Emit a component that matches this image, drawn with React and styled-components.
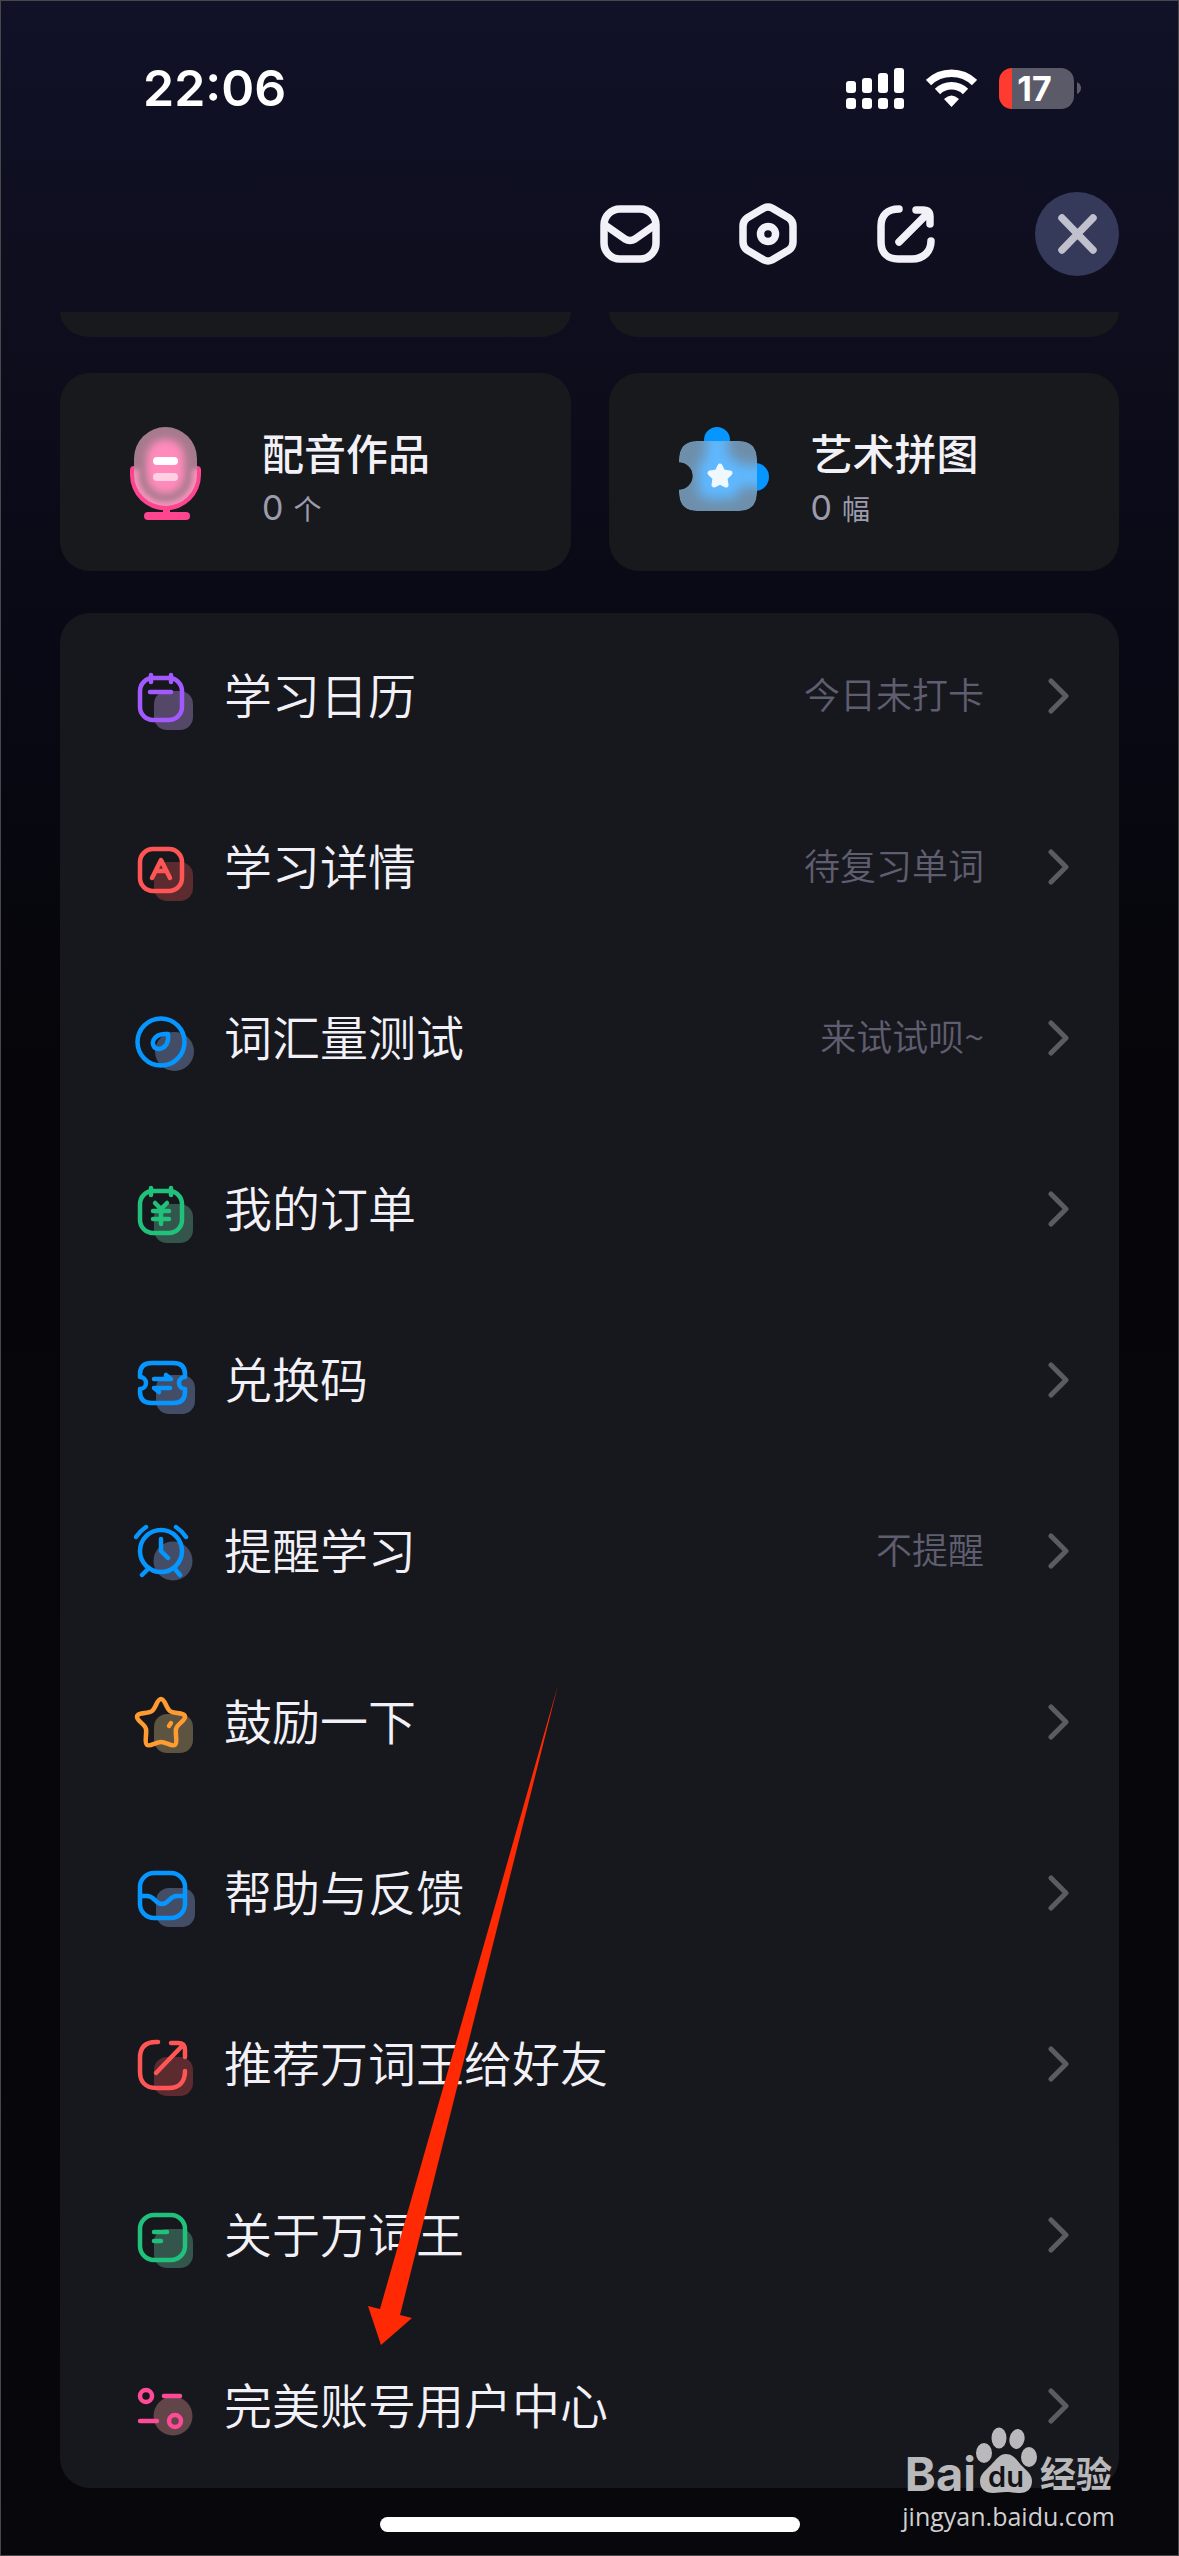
import React from "react";
import styled, { createGlobalStyle } from "styled-components";

const cjk = `"Noto Sans CJK SC", "Noto Sans", sans-serif`;
const latin = `Inter, "Noto Sans CJK SC", sans-serif`;

const GlobalStyle = createGlobalStyle`
  *, *::before, *::after { box-sizing: border-box; }
  body { margin: 0; background: #07070c; }
`;

const Page = styled.div`
  position: relative;
  display: flex;
  flex-direction: column;
  min-height: 100vh;
  border: 1px solid #48484c;
  background: linear-gradient(#111128 0, #0e0e1e 300px, #080914 660px, #060509 1080px, #07070c 100%);
  color: #f2f1f8;
  font-family: ${cjk};
`;

const StatusBar = styled.div`
  display: flex;
  align-items: center;
  justify-content: space-between;
  padding: 56px 97px 0 142px;
`;

const Time = styled.time`
  font: 600 50px/62px ${latin};
  color: #fff;
`;

const StatusIcons = styled.div`
  display: flex;
  align-items: center;
  gap: 22px;
`;

const Battery = styled.div`
  display: flex;
  align-items: center;
  gap: 3px;
`;

const BatteryBody = styled.div`
  width: 75px;
  height: 41px;
  padding-right: 4px;
  border-radius: 13px;
  background: linear-gradient(90deg, #ff3b30 13px, #5b5a68 13px);
  color: #fff;
  font: 700 34px/41px ${latin};
  text-align: center;
`;

const Toolbar = styled.header`
  display: flex;
  align-items: center;
  justify-content: flex-end;
  gap: 74px;
  padding: 73px 59px 36px;
`;

const ToolButton = styled.button`
  display: block;
  width: 64px;
  height: 64px;
  padding: 0;
  border: 0;
  background: none;
  color: #f2f1f8;
`;

const CloseButton = styled(ToolButton)`
  display: grid;
  place-items: center;
  width: 84px;
  height: 84px;
  margin-left: 23px;
  border-radius: 50%;
  background: #363a5a;
  color: #c1c1cd;
`;

const Content = styled.main`
  display: flex;
  flex-direction: column;
  padding: 0 59px;
`;

const CardGrid = styled.section`
  display: grid;
  grid-template-columns: 1fr 1fr;
  column-gap: 38px;
  margin-bottom: ${(p) => p.$after}px;
`;

const CardEnd = styled.div`
  height: 25px;
  border-radius: 0 0 30px 30px / 0 0 25px 25px;
  background: #17191d;
`;

const Card = styled.a`
  display: flex;
  align-items: center;
  gap: 32px;
  height: 198px;
  padding-left: 70px;
  border-radius: 30px;
  background: #17191d;
  color: inherit;
  text-decoration: none;
`;

const CardText = styled.div`
  display: flex;
  flex-direction: column;
  gap: 4px;
  padding-top: 16px;
`;

const CardTitle = styled.h2`
  margin: 0;
  font-size: 42px;
  line-height: 52px;
  font-weight: 500;
`;

const CardCount = styled.p`
  display: flex;
  align-items: baseline;
  gap: 10px;
  margin: 0;
  color: #9d9bae;
  font-size: 28px;
  line-height: 52px;
`;

const Count = styled.span`
  font-family: ${latin};
  font-size: 34px;
`;

const List = styled.nav`
  position: relative;
  display: flex;
  flex-direction: column;
  gap: 6px;
  border-radius: 30px;
  background: #17181d;
`;

const Row = styled.a`
  display: flex;
  align-items: center;
  height: 165px;
  padding: 0 50px 0 74px;
  color: inherit;
  text-decoration: none;
`;

const RowLabel = styled.span`
  flex: 1;
  margin-left: 22px;
  padding-bottom: 6px;
  font-size: 48px;
  line-height: 64px;
  font-weight: 350;
`;

const RowMeta = styled.span`
  margin-right: 64px;
  padding-bottom: 6px;
  color: #5f5d70;
  font-size: 36px;
  line-height: 48px;
  font-weight: 350;
`;

const Pointer = styled.svg`
  position: absolute;
  left: 308px;
  top: 1072px;
  pointer-events: none;
`;

const HomeBar = styled.div`
  width: 420px;
  height: 15px;
  margin: 29px auto 23px;
  border-radius: 8px;
  background: #fff;
`;

const Watermark = styled.div`
  position: absolute;
  right: 63px;
  bottom: 22px;
  display: flex;
  flex-direction: column;
  align-items: flex-end;
  color: #b9b9bb;
  pointer-events: none;
`;

const Brand = styled.div`
  display: flex;
  align-items: flex-end;
  margin: 0 3px 4px 0;
  font: 700 47px/42px ${latin};
`;

const BrandSuffix = styled.span`
  margin-left: 2px;
  font: 700 36px/46px ${cjk};
`;

const Site = styled.div`
  color: #d0d0d2;
  font: 400 25px/34px "Open Sans", "Noto Sans", sans-serif;
`;

const shade = {
  purple: ["#a259ff", "#544768"],
  red: ["#ff5655", "#5b2b30"],
  blue: ["#0696ff", "#444d66"],
  green: ["#1fc17b", "#33554b"],
  orange: ["#ff9b30", "#5c5341"],
  pink: ["#ff4a97", "#614548"],
};

const Sheet = ({ x = 20, y = 31 }) => <rect x={x} y={y} width="39" height="39" rx="13" />;
const Disc = ({ x = 39, y = 46 }) => <circle cx={x} cy={y} r="19.5" />;

const calendar = (
  <>
    <rect x="6" y="18" width="42" height="42" rx="13" />
    <path d="M17 15V22M37 15V22" />
  </>
);

const glyphs = {
  calendar: { back: <Sheet />, front: <>{calendar}<path d="M16 32H37" /></> },
  words: {
    back: <Sheet />,
    front: <><rect x="6" y="18" width="42" height="42" rx="13" /><path d="M18 47L27 29L36 47M22 40H32" /></>,
  },
  compass: {
    back: <Disc x={40.5} y={49.5} />,
    front: <><circle cx="27" cy="40" r="23.5" /><path d="M34 32C35 40 32 46 25 47C19 47 18 41 19.500 38C22 33 28 31.500 34 32Z" /></>,
  },
  order: { back: <Sheet />, front: <>{calendar}<path d="M21 30L27 36L33 30M27 36V51M19 38H35M19 46H35" /></> },
  ticket: {
    back: <Sheet x={22} />,
    front: <path d="M6 33V30Q6 19 18 19H39Q51 19 51 30V33A6 6 0 0 0 51 45V48Q51 59 39 59H18Q6 59 6 48V45A6 6 0 0 0 6 33ZM20 35H37L32 31M36 44H20L25 48" />,
  },
  clock: {
    back: <Disc />,
    front: <><circle cx="27" cy="36" r="21" /><path d="M27 24V36L34 43M2 22Q6 16 12 12M42 12Q48 16 52 22M15 53L8 60M40 53L46 60" /></>,
  },
  star: {
    back: <Sheet y={28} />,
    front: <path d="M27 13C31 13 32 22 36 25C40 28 51 26 51 31C51 35 43 38 42 43C41 48 44 57 41 59C38 61 32 56 27 56C22 56 16 61 13 59C10 57 13 48 12 43C11 38 3 35 3 31C3 26 14 28 18 25C22 22 23 13 27 13ZM35 40L37 37" />,
  },
  inbox: {
    back: <Sheet x={22} />,
    front: <><rect x="6" y="16" width="45" height="45" rx="14" /><path d="M6 39H13C21 39 21 47 28 47C35 47 35 39 43 39H51" /></>,
  },
  share: {
    back: <Sheet y={29} />,
    front: <path d="M24 14H22C11 14 6 20 6 30V44C6 54 12 60 22 60H35C45 60 51 54 51 43M37 15H44Q51 15 51 22V29M49 17L22 45" />,
  },
  about: {
    back: <Sheet y={30} />,
    front: <><rect x="6" y="16" width="45" height="45" rx="14" /><path d="M20 33H33M20 42H27" /></>,
  },
  sliders: {
    back: <Disc />,
    front: <><circle cx="12" cy="26" r="6" /><circle cx="41" cy="51" r="6" /><path d="M30 26H46M6 51H23" /></>,
  },
};

function RowIcon({ name, tone }) {
  const [line, fill] = shade[tone];
  return (
    <svg width="68" height="72" viewBox="0 0 68 72" aria-hidden="true">
      <g fill={fill}>{glyphs[name].back}</g>
      <g fill="none" stroke={line} strokeWidth="4.500" strokeLinecap="round" strokeLinejoin="round">
        {glyphs[name].front}
      </g>
    </svg>
  );
}

const Chevron = () => (
  <svg width="21" height="36" viewBox="0 0 21 36" fill="none" stroke="#5b5b62" strokeWidth="5" strokeLinecap="round" strokeLinejoin="round" aria-hidden="true">
    <path d="M3 3L18 18L3 33" />
  </svg>
);

const ToolIcon = ({ children }) => (
  <svg width="64" height="64" viewBox="0 0 64 64" fill="none" stroke="currentColor" strokeWidth="7.5" strokeLinecap="round" strokeLinejoin="round" aria-hidden="true">
    {children}
  </svg>
);

const MicIcon = () => (
  <svg width="100" height="100" viewBox="0 0 100 100" aria-hidden="true">
    <defs>
      <clipPath id="head"><rect x="4" y="5" width="63" height="79" rx="31.500" /></clipPath>
      <filter id="soft" x="-50%" y="-50%" width="200%" height="200%"><feGaussianBlur stdDeviation="5" /></filter>
      <filter id="softer" x="-50%" y="-50%" width="200%" height="200%"><feGaussianBlur stdDeviation="2.500" /></filter>
    </defs>
    <path fill="#ff4590" d="M0 48Q0 44 4 44H67Q71 44 71 48V53A35.500 35.500 0 0 1 0 53Z" />
    <rect x="33" y="86" width="7" height="8" fill="#ff4590" />
    <rect x="14" y="90" width="46" height="8" rx="4" fill="#ff4590" />
    <g clipPath="url(#head)">
      <rect x="4" y="5" width="63" height="79" fill="#a67a8d" />
      <path filter="url(#softer)" fill="none" stroke="#f592ba" strokeWidth="10" d="M4 47V53A31.500 31.500 0 0 0 67 53V47" />
      <rect filter="url(#soft)" x="18" y="18" width="35" height="53" rx="17" fill="#ff8abb" />
      <rect filter="url(#soft)" x="20" y="22" width="31" height="45" rx="15" fill="#ff8abb" />
    </g>
    <rect x="23" y="35" width="25" height="8" rx="4" fill="#fff" />
    <rect x="23" y="51" width="25" height="8" rx="4" fill="#ffd0e4" />
  </svg>
);

const puzzleBody = "M18 19H60Q78 19 78 38V70Q78 89 60 89H18Q0 89 0 70V67.500A13.500 13.500 0 0 0 0 40.500V38Q0 19 18 19Z";

const PuzzleIcon = () => (
  <svg width="100" height="100" viewBox="0 0 100 100" aria-hidden="true">
    <defs>
      <clipPath id="piece"><path d={puzzleBody} /></clipPath>
      <filter id="glow" x="-50%" y="-50%" width="200%" height="200%"><feGaussianBlur stdDeviation="6" /></filter>
    </defs>
    <circle cx="38" cy="18" r="13" fill="#0696ff" />
    <circle cx="76" cy="55" r="14" fill="#0696ff" />
    <g clipPath="url(#piece)">
      <path d={puzzleBody} fill="#6e8fab" />
      <g filter="url(#glow)" fill="#5fb8ff">
        <rect x="19" y="35" width="42" height="42" rx="12" />
        <rect x="27" y="10" width="22" height="30" />
        <rect x="54" y="43" width="34" height="22" />
      </g>
    </g>
    <path fill="#f0f8ff" stroke="#f0f8ff" strokeWidth="5" strokeLinejoin="round" d="M41 44L44 50L51 51L46 56L47 63L41 60L35 63L36 56L31 51L38 50Z" />
  </svg>
);

const rows = [
  { icon: "calendar", tone: "purple", label: "学习日历", meta: "今日未打卡" },
  { icon: "words", tone: "red", label: "学习详情", meta: "待复习单词" },
  { icon: "compass", tone: "blue", label: "词汇量测试", meta: "来试试呗~" },
  { icon: "order", tone: "green", label: "我的订单" },
  { icon: "ticket", tone: "blue", label: "兑换码" },
  { icon: "clock", tone: "blue", label: "提醒学习", meta: "不提醒" },
  { icon: "star", tone: "orange", label: "鼓励一下" },
  { icon: "inbox", tone: "blue", label: "帮助与反馈" },
  { icon: "share", tone: "red", label: "推荐万词王给好友" },
  { icon: "about", tone: "green", label: "关于万词王" },
  { icon: "sliders", tone: "pink", label: "完美账号用户中心" },
];

export default function App() {
  return (
    <Page>
      <GlobalStyle />
      <StatusBar>
        <Time>22:06</Time>
        <StatusIcons>
          <svg width="58" height="41" viewBox="0 0 58 41" fill="#fff" aria-hidden="true">
            <rect x="0" y="13" width="10" height="12" rx="3" />
            <rect x="16" y="10" width="10" height="15" rx="3" />
            <rect x="32" y="5" width="10" height="20" rx="3" />
            <rect x="48" y="0" width="10" height="25" rx="3" />
            {[0, 16, 32, 48].map((x) => <rect key={x} x={x} y="30" width="10" height="11" rx="3" />)}
          </svg>
          <svg width="51" height="38" viewBox="0 0 51 38" aria-hidden="true">
            <g fill="none" stroke="#fff" strokeWidth="7.500">
              <path d="M2.500 13.500A33 33 0 0 1 48.500 13.500" />
              <path d="M11.500 22.500A20 20 0 0 1 39.500 22.500" />
            </g>
            <path fill="#fff" d="M18 30Q25.500 23 33 30L25.500 38Z" />
          </svg>
          <Battery>
            <BatteryBody>17</BatteryBody>
            <svg width="4" height="12" viewBox="0 0 4 12" aria-hidden="true"><path fill="#5b5a68" d="M0 0Q4 2 4 6T0 12Z" /></svg>
          </Battery>
        </StatusIcons>
      </StatusBar>

      <Toolbar>
        <ToolButton aria-label="消息">
          <ToolIcon>
            <rect x="6" y="7" width="52" height="50" rx="16" />
            <path d="M7 23L27 37Q32 40 37 37L57 23" />
          </ToolIcon>
        </ToolButton>
        <ToolButton aria-label="设置">
          <ToolIcon>
            <path d="M28 6Q32 4 36 6L53 16Q57 19 57 24V40Q57 45 53 48L36 58Q32 60 28 58L11 48Q7 45 7 40V24Q7 19 11 16Z" />
            <circle cx="32" cy="32" r="7.500" />
          </ToolIcon>
        </ToolButton>
        <ToolButton aria-label="分享">
          <ToolIcon>
            <path d="M25 7C13 7 7 14 7 24V40C7 51 14 57 24 57H38C50 57 57 49 57 39M42 8H49Q56 8 56 15V22M52 13L25 40" />
          </ToolIcon>
        </ToolButton>
        <CloseButton aria-label="关闭">
          <svg width="40" height="40" viewBox="0 0 40 40" fill="none" stroke="currentColor" strokeWidth="7.500" strokeLinecap="round" aria-hidden="true">
            <path d="M5 4L36 36M36 4L5 36" />
          </svg>
        </CloseButton>
      </Toolbar>

      <Content>
        <CardGrid $after={36}>
          <CardEnd />
          <CardEnd />
        </CardGrid>
        <CardGrid $after={42}>
          <Card href="#dubbing">
            <MicIcon />
            <CardText>
              <CardTitle>配音作品</CardTitle>
              <CardCount><Count>0</Count>个</CardCount>
            </CardText>
          </Card>
          <Card href="#puzzles">
            <PuzzleIcon />
            <CardText>
              <CardTitle>艺术拼图</CardTitle>
              <CardCount><Count>0</Count>幅</CardCount>
            </CardText>
          </Card>
        </CardGrid>
        <List>
          {rows.map((r) => (
            <Row key={r.icon} href={"#" + r.icon}>
              <RowIcon name={r.icon} tone={r.tone} />
              <RowLabel>{r.label}</RowLabel>
              {r.meta && <RowMeta>{r.meta}</RowMeta>}
              <Chevron />
            </Row>
          ))}
          <Pointer width="190" height="660" viewBox="0 0 190 660" aria-hidden="true">
            <path fill="#ff2a04" d="M190 0L32 630L44 633L13 660L0 621L12 624Z" />
          </Pointer>
        </List>
      </Content>

      <HomeBar />

      <Watermark>
        <Brand>
          Bai
          <svg width="62" height="68" viewBox="0 0 62 68" fill="currentColor" aria-hidden="true">
            <ellipse cx="8" cy="26" rx="8" ry="10" />
            <ellipse cx="23" cy="11" rx="7.500" ry="10.500" />
            <ellipse cx="41" cy="12" rx="7.500" ry="10" transform="rotate(12 41 12)" />
            <ellipse cx="53" cy="30" rx="8" ry="10" />
            <path d="M30 27C37 27 41 33 45 38C50 43 56 47 56 54C56 62 51 66 44 66C39 66 35 65 30 65C25 65 22 66 17 66C9 66 4 62 4 54C4 47 10 43 15 38C20 33 23 27 30 27Z" />
            <text x="30" y="60" textAnchor="middle" fill="#121317" fontFamily="Inter, sans-serif" fontSize="29" fontWeight="600">du</text>
          </svg>
          <BrandSuffix>经验</BrandSuffix>
        </Brand>
        <Site>jingyan.baidu.com</Site>
      </Watermark>
    </Page>
  );
}
